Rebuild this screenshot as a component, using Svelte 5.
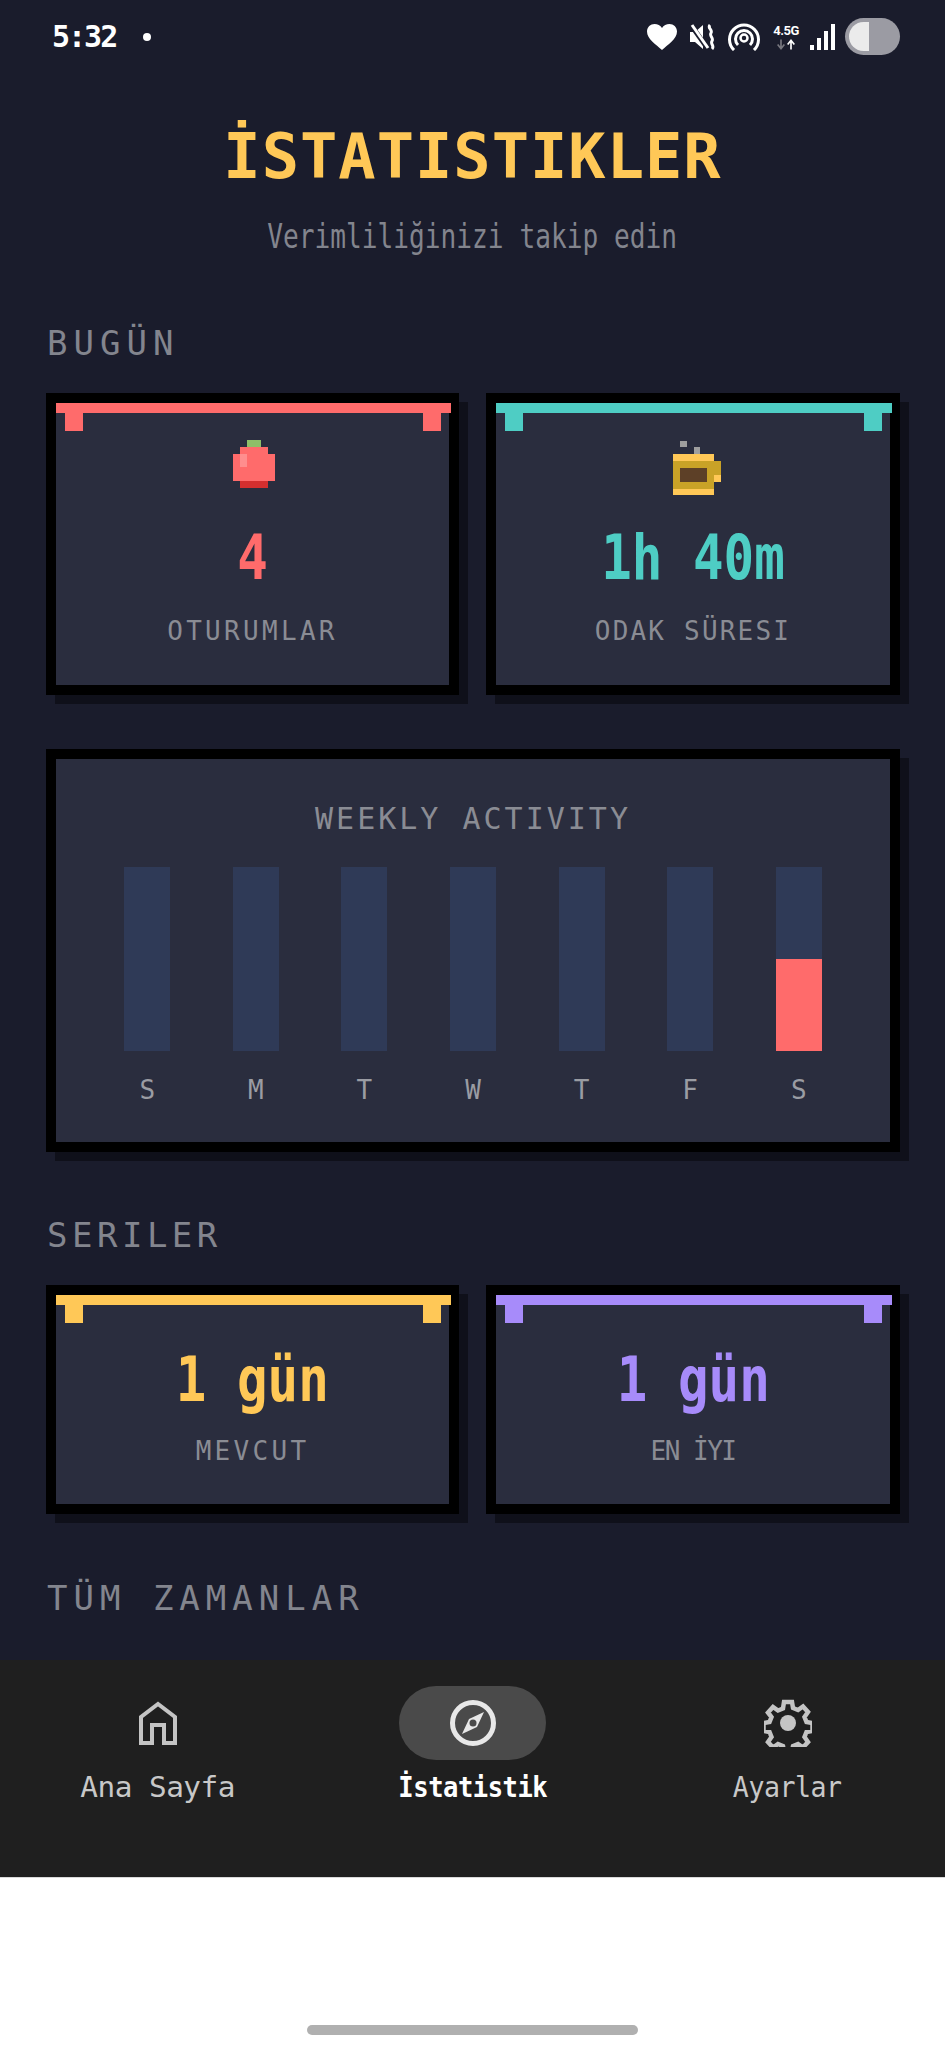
<script>
  const days = [
    { label: "S", fill: 0 },
    { label: "M", fill: 0 },
    { label: "T", fill: 0 },
    { label: "W", fill: 0 },
    { label: "T", fill: 0 },
    { label: "F", fill: 0 },
    { label: "S", fill: 50 }
  ];
</script>

<div class="screen">
  <main class="page">
    <div class="status">
      <span class="time">5:32</span>
      <span class="dot"></span>
      <div class="status-icons">
        <svg class="ic-heart" viewBox="0 0 30 26"><path d="M15 26C9 20.500 0 15 0 7.500 0 3 3.500 0 7.500 0 10.500 0 13.500 1.500 15 4 16.500 1.500 19.500 0 22.500 0 26.500 0 30 3 30 7.500 30 15 21 20.500 15 26Z" fill="#fff"/></svg>
        <svg class="ic-mute" viewBox="0 0 26 26"><path d="M0 8h5l8-7v24l-8-7H0Z" fill="#fff"/><path d="M1 1l17 24" stroke="#1a1c2c" stroke-width="5"/><path d="M2 1l16 23" stroke="#fff" stroke-width="3"/><path d="M20 1c-3 3 3 5 1 8-2 3 3 5 1 8-2 3 3 5 0 8" fill="none" stroke="#fff" stroke-width="3"/></svg>
        <svg class="ic-cast" viewBox="0 0 32 28"><g fill="none" stroke="#fff" stroke-width="3"><path d="M6 27A14.500 14.500 0 1 1 26 27"/><path d="M10 22A8.500 8.500 0 1 1 22 22"/></g><circle cx="16" cy="15" r="3.500" fill="none" stroke="#fff" stroke-width="2.500"/></svg>
        <div class="net">
          <span>4.5G</span>
          <svg viewBox="0 0 24 12"><path d="M6 0v10M2 6l4 5 4-5" fill="none" stroke="#77777f" stroke-width="2"/><path d="M18 12V2M14 6l4-5 4 5" fill="none" stroke="#fff" stroke-width="2"/></svg>
        </div>
        <svg class="ic-signal" viewBox="0 0 25 26"><rect x="0" y="21" width="4" height="5" fill="#fff"/><rect x="7" y="14" width="4" height="12" fill="#fff"/><rect x="14" y="7" width="4" height="19" fill="#fff"/><rect x="21" y="0" width="4" height="26" fill="#fff"/></svg>
        <div class="battery"><div class="battery-level"></div></div>
      </div>
    </div>

    <header class="head">
      <h1><span>İSTATISTIKLER</span></h1>
      <p><span>Verimliliğinizi takip edin</span></p>
    </header>

    <h2 class="section first">BUGÜN</h2>
    <div class="pair">
      <div class="card today coral">
        <svg class="pix tomato" viewBox="0 0 6 7" shape-rendering="crispEdges">
          <rect x="2" y="0" width="2" height="1" fill="#8fbf68"/>
          <rect x="1" y="1" width="4" height="1" fill="#ff6b6b"/>
          <rect x="0" y="2" width="6" height="4" fill="#ff6b6b"/>
          <rect x="1" y="2" width="1" height="2" fill="#ff8e8e"/>
          <rect x="1" y="6" width="4" height="1" fill="#d32f2f"/>
        </svg>
        <div class="value"><span>4</span></div>
        <div class="label">OTURUMLAR</div>
      </div>
      <div class="card today teal">
        <svg class="pix coffee" viewBox="0 0 7 8" shape-rendering="crispEdges">
          <rect x="1" y="0" width="1" height="1" fill="#9e9e9e"/>
          <rect x="3" y="1" width="1" height="1" fill="#9e9e9e"/>
          <rect x="0" y="2" width="6" height="6" fill="#c9a227"/>
          <rect x="0" y="2" width="6" height="1" fill="#ffc857"/>
          <rect x="0" y="7" width="6" height="1" fill="#ffc857"/>
          <rect x="1" y="4" width="4" height="2" fill="#5d4027"/>
          <rect x="6" y="3" width="1" height="3" fill="#c9a227"/>
          <rect x="6" y="5" width="1" height="1" fill="#ffc857"/>
        </svg>
        <div class="value"><span>1h 40m</span></div>
        <div class="label mid">ODAK SÜRESI</div>
      </div>
    </div>

    <div class="card weekly">
      <div class="weekly-title">WEEKLY ACTIVITY</div>
      <div class="chart">
        {#each days as day}
          <div class="day">
            <div class="track">
              <div class="fill" style="height: {day.fill}%"></div>
            </div>
            <span>{day.label}</span>
          </div>
        {/each}
      </div>
    </div>

    <h2 class="section second">SERILER</h2>
    <div class="pair">
      <div class="card streak yellow">
        <div class="value"><span>1 gün</span></div>
        <div class="label">MEVCUT</div>
      </div>
      <div class="card streak purple">
        <div class="value"><span>1 gün</span></div>
        <div class="label tight">EN İYI</div>
      </div>
    </div>

    <h2 class="section third">TÜM ZAMANLAR</h2>
  </main>

  <nav class="nav">
    <div class="nav-item wide">
      <div class="nav-icon">
        <svg width="40" height="44" viewBox="0 0 40 44" fill="none" stroke="#c4c4c4" stroke-width="4"><path d="M3 42V16L20 3l17 13v26H26V24H14v18Z" stroke-linejoin="miter"/></svg>
      </div>
      <span>Ana Sayfa</span>
    </div>
    <div class="nav-item active">
      <div class="nav-icon">
        <svg width="48" height="48" viewBox="0 0 48 48"><circle cx="24" cy="24" r="20.500" fill="none" stroke="#e8e8e8" stroke-width="5"/><path d="M35 13 28 28 13 35 20 20Z" fill="#e8e8e8"/><circle cx="24" cy="24" r="3.500" fill="#4a4a4a"/></svg>
      </div>
      <span>İstatistik</span>
    </div>
    <div class="nav-item">
      <div class="nav-icon">
        <svg width="48" height="48" viewBox="0 0 48 48"><path d="M20 3h8l1 6 5 2 5-3.500 5 5.500-3.500 5 2 5 6 1v8l-6 1-2 5 3.500 5-5 5.500-5-3.500-5 2-1 6h-8l-1-6-5-2-5 3.500-5-5.500 3.500-5-2-5-6-1v-8l6-1 2-5L4 13.500 9 8l5 3.500 5-2Z" fill="none" stroke="#c4c4c4" stroke-width="4.500"/><circle cx="24" cy="24" r="8" fill="#c4c4c4"/></svg>
      </div>
      <span>Ayarlar</span>
    </div>
  </nav>

  <div class="gesture-area">
    <div class="gesture"></div>
  </div>
</div>

<style>
  :global(body) {
    margin: 0;
    background: #fff;
  }
  .screen {
    width: 945px;
    height: 2048px;
    overflow: hidden;
    display: flex;
    flex-direction: column;
    font-family: "DejaVu Sans Mono", "Liberation Mono", monospace;
  }
  .page {
    height: 1660px;
    background: #1a1c2c;
    overflow: hidden;
    flex: none;
  }

  /* status bar */
  .status {
    height: 73px;
    display: flex;
    align-items: center;
    padding: 0 45px 0 52px;
    box-sizing: border-box;
    color: #fff;
  }
  .time {
    font-size: 30px;
    font-weight: 700;
    line-height: 30px;
    width: 66px;
    letter-spacing: -2px;
  }
  .dot {
    width: 8px;
    height: 8px;
    border-radius: 50%;
    background: #fff;
    margin-left: 25px;
  }
  .status-icons {
    margin-left: auto;
    display: flex;
    align-items: center;
  }
  .ic-heart { width: 30px; height: 26px; }
  .ic-mute { width: 26px; height: 26px; margin-left: 13px; }
  .ic-cast { width: 32px; height: 28px; margin-left: 12px; }
  .net {
    width: 32px;
    margin-left: 10px;
    display: flex;
    flex-direction: column;
    align-items: center;
    font-family: "Roboto", sans-serif;
    font-size: 13px;
    line-height: 13px;
    font-weight: 700;
    letter-spacing: -0.5px;
  }
  .net svg { width: 20px; height: 11px; margin-top: 2px; }
  .ic-signal { width: 25px; height: 26px; margin-left: 8px; }
  .battery {
    width: 55px;
    height: 37px;
    margin-left: 10px;
    border-radius: 19px;
    background: #9b9ba3;
    padding: 4px;
    box-sizing: border-box;
  }
  .battery-level {
    width: 20px;
    height: 29px;
    background: #ebebeb;
    border-radius: 15px 0 0 15px;
  }

  /* header */
  .head {
    text-align: center;
  }
  .head h1 {
    margin: 53px 0 0;
    font-size: 62px;
    line-height: 62px;
    font-weight: 700;
    color: #ffc857;
  }
  .head h1 span {
    display: inline-block;
    letter-spacing: 1px;
  }
  .head p {
    margin: 28px 0 0;
    font-size: 34px;
    line-height: 40px;
    color: #83858e;
  }
  .head p span {
    display: inline-block;
    transform: scaleX(0.77);
  }

  .section {
    margin: 0;
    padding-left: 47px;
    font-size: 34px;
    line-height: 40px;
    font-weight: 400;
    color: #83858e;
    letter-spacing: 6px;
  }
  .section.first { margin-top: 67px; }
  .section.second { margin-top: 63px; letter-spacing: 4.500px; }
  .section.third { margin-top: 64px; }

  .pair {
    display: grid;
    grid-template-columns: 413px 414px;
    gap: 27px;
    padding-left: 46px;
  }
  .section.first + .pair { margin-top: 30px; }
  .section.second + .pair { margin-top: 30px; }

  .card {
    position: relative;
    box-sizing: border-box;
    background: #2a2d3e;
    border: 10px solid #000;
    box-shadow: 9px 9px 0 #0f101a;
    text-align: center;
  }
  .card.today { height: 302px; padding-top: 37px; }
  .card.streak { height: 229px; padding-top: 54px; }

  /* top strip with the two little tabs */
  .today::before, .streak::before {
    content: "";
    position: absolute;
    top: 0;
    left: 0;
    right: -2px;
    height: 10px;
    background: var(--accent);
  }
  .today::after, .streak::after {
    content: "";
    position: absolute;
    top: 10px;
    left: 9px;
    right: 8px;
    height: 18px;
    background:
      linear-gradient(var(--accent), var(--accent)) left top / 18px 100% no-repeat,
      linear-gradient(var(--accent), var(--accent)) right top / 18px 100% no-repeat;
  }
  .coral { --accent: #ff6b6b; }
  .teal { --accent: #4ecdc4; }
  .yellow { --accent: #ffc857; }
  .purple { --accent: #a78bfa; }

  .pix { display: block; margin: 0 auto; }
  .tomato { width: 42px; height: 48px; transform: translateX(1px); }
  .coffee { width: 48px; height: 56px; transform: translateX(4px); margin-bottom: -8px; }

  .value {
    font-size: 62px;
    line-height: 62px;
    font-weight: 700;
    color: var(--accent);
    margin-top: 39px;
  }
  .streak .value { margin-top: 0; }
  .value span {
    display: inline-block;
    transform: scaleX(0.82);
  }
  .label {
    font-size: 26px;
    line-height: 30px;
    color: #8a8c94;
    letter-spacing: 3.300px;
    margin-top: 27px;
  }
  .streak .label { margin-top: 25px; }
  .label.mid { letter-spacing: 2.200px; }
  .label.tight { letter-spacing: -1.500px; }

  /* weekly chart */
  .weekly {
    height: 403px;
    margin: 54px 0 0 46px;
    width: 854px;
    padding: 42px 37px 0;
  }
  .weekly-title {
    font-size: 30px;
    line-height: 36px;
    letter-spacing: 3px;
    color: #8a8c94;
  }
  .chart {
    margin-top: 30px;
    display: grid;
    grid-template-columns: repeat(7, 1fr);
  }
  .day {
    display: flex;
    flex-direction: column;
    align-items: center;
    font-size: 26px;
    line-height: 30px;
    color: #9a9ca3;
  }
  .track {
    position: relative;
    width: 46px;
    height: 184px;
    background: #2f3a57;
    margin-bottom: 24px;
  }
  .fill {
    position: absolute;
    left: 0;
    right: 0;
    bottom: 0;
    background: #ff6b6b;
  }

  /* bottom nav */
  .nav {
    height: 218px;
    flex: none;
    box-sizing: border-box;
    background: #1f1f1f;
    border-bottom: 1px solid #d9d9d9;
    display: grid;
    grid-template-columns: repeat(3, 315px);
    padding-top: 26px;
  }
  .nav-item {
    display: flex;
    flex-direction: column;
    align-items: center;
    color: #c8c8c8;
    font-size: 28px;
    line-height: 34px;
  }
  .nav-item span {
    display: inline-block;
    margin-top: 11px;
    letter-spacing: -0.500px;
    transform: scaleX(0.95);
  }
  .nav-item.wide span { transform: scaleX(1.05); }
  .nav-icon {
    width: 147px;
    height: 74px;
    border-radius: 37px;
    display: flex;
    align-items: center;
    justify-content: center;
  }
  .active { color: #fff; font-weight: 700; }
  .nav-item.active span { transform: scaleX(0.91); }
  .active .nav-icon { background: #4a4a4a; }

  .gesture-area {
    flex: 1;
    background: #fff;
    display: flex;
    justify-content: center;
    padding-top: 147px;
  }
  .gesture {
    width: 331px;
    height: 10px;
    border-radius: 5px;
    background: #b0b0b0;
  }
</style>
